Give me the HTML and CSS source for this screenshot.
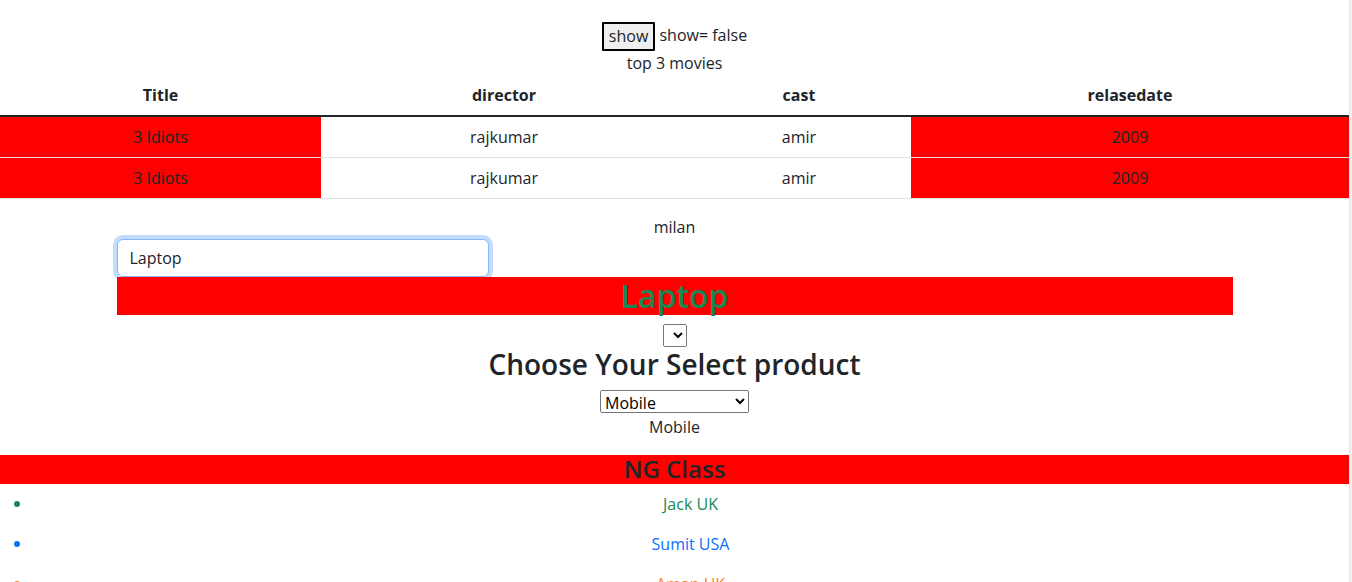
FILE: index.html
```html
<!DOCTYPE html>
<html lang="en">
<head>
<meta charset="utf-8">
<title>Movies</title>
<link rel="stylesheet" href="styles.css">
</head>
<body>
<div class="app">
  <div class="toggle-row"><button class="btn-show" type="button">show</button> show= false</div>
  <div class="caption">top 3 movies</div>
  <table class="movies">
    <colgroup>
      <col class="col-title">
      <col class="col-director">
      <col class="col-cast">
      <col class="col-date">
    </colgroup>
    <thead>
      <tr><th>Title</th><th>director</th><th>cast</th><th>relasedate</th></tr>
    </thead>
    <tbody>
      <tr><td class="hl">3 Idiots</td><td>rajkumar</td><td>amir</td><td class="hl">2009</td></tr>
      <tr><td class="hl">3 Idiots</td><td>rajkumar</td><td>amir</td><td class="hl">2009</td></tr>
    </tbody>
  </table>
  <div class="container">
    <div class="name">milan</div>
    <input class="search" type="text" value="Laptop">
    <h2 class="laptop">Laptop</h2>
    <div class="pick-row"><select class="empty-select"></select></div>
    <h3 class="choose">Choose Your Select product</h3>
    <div class="product-row">
      <select class="product">
        <option selected>Mobile</option>
        <option>Laptop</option>
        <option>Tablet</option>
      </select>
    </div>
    <p class="chosen">Mobile</p>
  </div>
  <h4 class="ng">NG Class</h4>
  <ul class="people">
    <li class="p-green">Jack UK</li>
    <li class="p-blue">Sumit USA</li>
    <li class="p-orange">Aman UK</li>
    <li class="p-green">Ravi IN</li>
  </ul>
</div>
</body>
</html>
```

FILE: styles.css
```css
html {
  background: #f1f1f1;
  overflow: hidden;
}
body {
  margin: 0;
  width: 1349px;
  min-height: 582px;
  background: #fff;
  border-right: 1px solid #e4e4e4;
  font-family: "Segoe UI", "Open Sans", sans-serif;
  font-size: 16px;
  line-height: 1.5;
  color: #212529;
}
.app {
  text-align: center;
}
.toggle-row {
  padding-top: 22px;
}
.btn-show {
  font: inherit;
  line-height: 25px;
  color: #212529;
  background: #efefef;
  border: 2px solid #000;
  border-radius: 1px;
  padding: 0 5px;
  margin: 0;
  vertical-align: middle;
}
.caption {
  line-height: 24px;
}
.movies {
  width: 100%;
  border-collapse: collapse;
  margin-bottom: 16px;
}
.col-title { width: 321px; }
.col-director { width: 366px; }
.col-cast { width: 224px; }
.col-date { width: 438px; }
.movies th {
  font-weight: 700;
  padding: 8px;
  border-bottom: 2px solid #212529;
}
.movies td {
  padding: 8px;
  border-bottom: 1px solid #dee2e6;
}
.movies td.hl {
  background: #ff0000;
}
.container {
  width: 1116px;
  margin: 0 auto;
}
.name {
  line-height: 24px;
}
.search {
  display: block;
  box-sizing: border-box;
  width: 372px;
  height: 38px;
  padding: 6px 12px;
  font: inherit;
  color: #212529;
  background: #fff;
  border: 1px solid #86b7fe;
  border-radius: 6px;
  box-shadow: 0 0 0 4px rgba(13, 110, 253, 0.25);
  outline: none;
  margin: 0;
}
.laptop {
  position: relative;
  margin: 0 0 8px;
  font-size: 32px;
  font-weight: 600;
  line-height: 1.2;
  color: #198754;
  background: #ff0000;
}
.pick-row {
  height: 25px;
}
.empty-select {
  width: 24px;
  height: 23px;
  font: inherit;
  margin-top: 1px;
  vertical-align: top;
}
.choose {
  margin: 0 0 8px;
  font-size: 28px;
  font-weight: 600;
  line-height: 1.2;
}
.product-row {
  height: 25px;
}
.product {
  width: 149px;
  height: 23px;
  font: inherit;
  font-size: 16px;
  vertical-align: top;
  color: #000;
}
.chosen {
  margin: 0 0 16px;
}
.ng {
  margin: 0 0 8px;
  font-size: 24px;
  font-weight: 600;
  line-height: 1.2;
  background: #ff0000;
}
.people {
  margin: 0;
  padding-left: 32px;
  list-style: none;
}
.people li {
  position: relative;
  margin-bottom: 16px;
  line-height: 24px;
}
.people li::before {
  content: "";
  position: absolute;
  left: -18px;
  top: 9px;
  width: 6px;
  height: 6px;
  border-radius: 50%;
  background: currentColor;
}
.p-green { color: #198754; }
.p-blue { color: #0d6efd; }
.p-orange { color: #fd7e14; }
```
